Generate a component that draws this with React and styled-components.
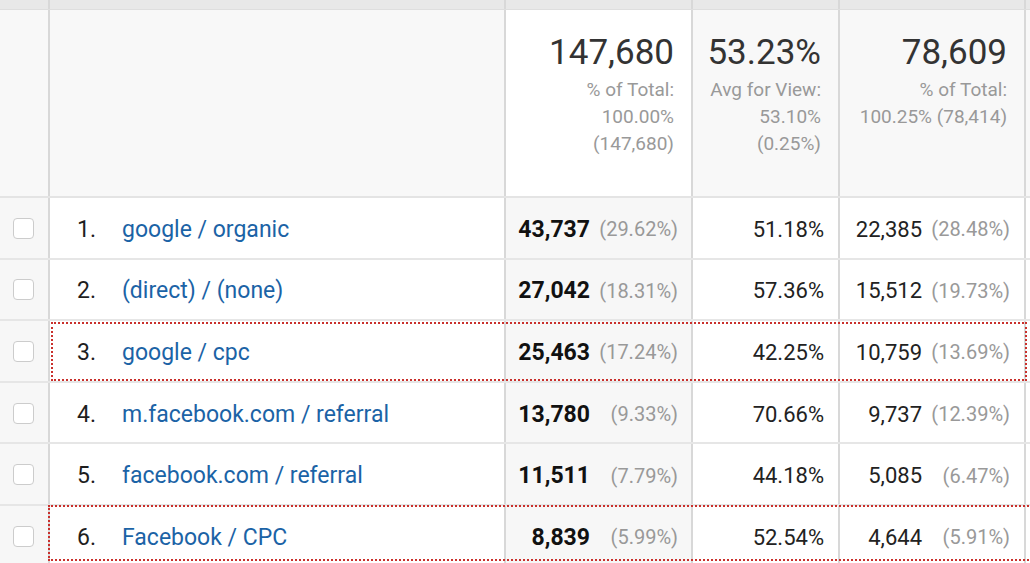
import React from 'react'
import styled, { createGlobalStyle, css } from 'styled-components'

const Global = createGlobalStyle`
  body {
    margin: 0;
    background: #ffffff;
    font-family: Roboto, "Liberation Sans", sans-serif;
    overflow: hidden;
  }
`

const columns = '50px 456px 187px 147px 186px 1fr'
const divider = '2px solid #d8d8d8'

const Table = styled.div`
  width: 1030px;
  height: 563px;
  overflow: hidden;
  display: flex;
  flex-direction: column;
`

const Band = styled.div`
  display: grid;
  grid-template-columns: ${columns};
  height: 9px;
  flex-shrink: 0;
  background: #e8e8e8;
  border-bottom: 1px solid #dedede;
  > div:not(:last-child) {
    border-right: ${divider};
  }
`

const HeaderRow = styled.div`
  display: grid;
  grid-template-columns: ${columns};
  height: 188px;
  flex-shrink: 0;
  box-sizing: border-box;
  border-bottom: 2px solid #e4e4e4;
`

const HeadCell = styled.div`
  background: ${(p) => (p.$white ? '#ffffff' : '#f8f8f8')};
  border-right: ${(p) => (p.$last ? 'none' : divider)};
  padding: 22px 17px 0 0;
  text-align: right;
`

const Total = styled.div`
  font-size: 35px;
  line-height: 42px;
  color: #333333;
`

const TotalNote = styled.div`
  margin-top: 2px;
  font-size: 19px;
  line-height: 27px;
  color: #999999;
`

const Row = styled.div`
  position: relative;
  display: grid;
  grid-template-columns: ${columns};
  height: 61.6px;
  flex-shrink: 0;
  box-sizing: border-box;
  border-bottom: 2px solid #e6e6e6;

  ${(p) =>
    p.$mark &&
    css`
      &::after {
        content: '';
        position: absolute;
        top: ${p.$mark.top}px;
        bottom: ${p.$mark.bottom}px;
        left: ${p.$mark.left}px;
        right: ${p.$mark.right}px;
        border: 2px dotted #c9302c;
        pointer-events: none;
      }
    `}
`

const Cell = styled.div`
  display: flex;
  align-items: center;
  justify-content: ${(p) => (p.$left ? 'flex-start' : 'flex-end')};
  background: ${(p) => (p.$shade ? '#f7f7f7' : '#ffffff')};
  border-right: ${(p) => (p.$last ? 'none' : divider)};
  padding: ${(p) => p.$pad || '0'};
  padding-top: 3px;
  font-size: 22px;
  color: #222222;
`

const CheckBox = styled.span`
  width: 19px;
  height: 19px;
  margin: -2px 0 0 13px;
  border: 1px solid #cccccc;
  border-radius: 4px;
  background: #ffffff;
`

const Rank = styled.span`
  width: 45px;
  font-size: 23px;
  color: #1e1e1e;
`

const Link = styled.a`
  font-size: 23px;
  color: #1b63a6;
  text-decoration: none;
`

const Strong = styled.span`
  font-size: 23px;
  font-weight: 700;
  color: #111111;
`

const Share = styled.span`
  min-width: 88px;
  text-align: right;
  font-size: 20px;
  color: #999999;
`

const rows = [
  { name: 'google / organic', sessions: '43,737', sp: '(29.62%)', rate: '51.18%', nu: '22,385', np: '(28.48%)' },
  { name: '(direct) / (none)', sessions: '27,042', sp: '(18.31%)', rate: '57.36%', nu: '15,512', np: '(19.73%)' },
  { name: 'google / cpc', sessions: '25,463', sp: '(17.24%)', rate: '42.25%', nu: '10,759', np: '(13.69%)', mark: { top: 1, bottom: 0, left: 51, right: 3 } },
  { name: 'm.facebook.com / referral', sessions: '13,780', sp: '(9.33%)', rate: '70.66%', nu: '9,737', np: '(12.39%)' },
  { name: 'facebook.com / referral', sessions: '11,511', sp: '(7.79%)', rate: '44.18%', nu: '5,085', np: '(6.47%)' },
  { name: 'Facebook / CPC', sessions: '8,839', sp: '(5.99%)', rate: '52.54%', nu: '4,644', np: '(5.91%)', mark: { top: -1, bottom: 5, left: 48, right: -6 } },
]

export default function App() {
  return (
    <>
      <Global />
      <Table>
        <Band>
          <div /><div /><div /><div /><div /><div />
        </Band>
        <HeaderRow>
          <HeadCell />
          <HeadCell />
          <HeadCell $white>
            <Total>147,680</Total>
            <TotalNote>% of Total:<br />100.00%<br />(147,680)</TotalNote>
          </HeadCell>
          <HeadCell>
            <Total>53.23%</Total>
            <TotalNote>Avg for View:<br />53.10%<br />(0.25%)</TotalNote>
          </HeadCell>
          <HeadCell>
            <Total>78,609</Total>
            <TotalNote>% of Total:<br />100.25% (78,414)</TotalNote>
          </HeadCell>
          <HeadCell $last />
        </HeaderRow>
        {rows.map((r, i) => (
          <Row key={r.name} $mark={r.mark}>
            <Cell $left $shade>
              <CheckBox />
            </Cell>
            <Cell $left $pad="0 0 0 27px">
              <Rank>{i + 1}.</Rank>
              <Link>{r.name}</Link>
            </Cell>
            <Cell $shade $pad="0 13px 0 0">
              <Strong>{r.sessions}</Strong>
              <Share>{r.sp}</Share>
            </Cell>
            <Cell $pad="0 14px 0 0">{r.rate}</Cell>
            <Cell $pad="0 14px 0 0">
              <span>{r.nu}</span>
              <Share>{r.np}</Share>
            </Cell>
            <Cell $last />
          </Row>
        ))}
      </Table>
    </>
  )
}
